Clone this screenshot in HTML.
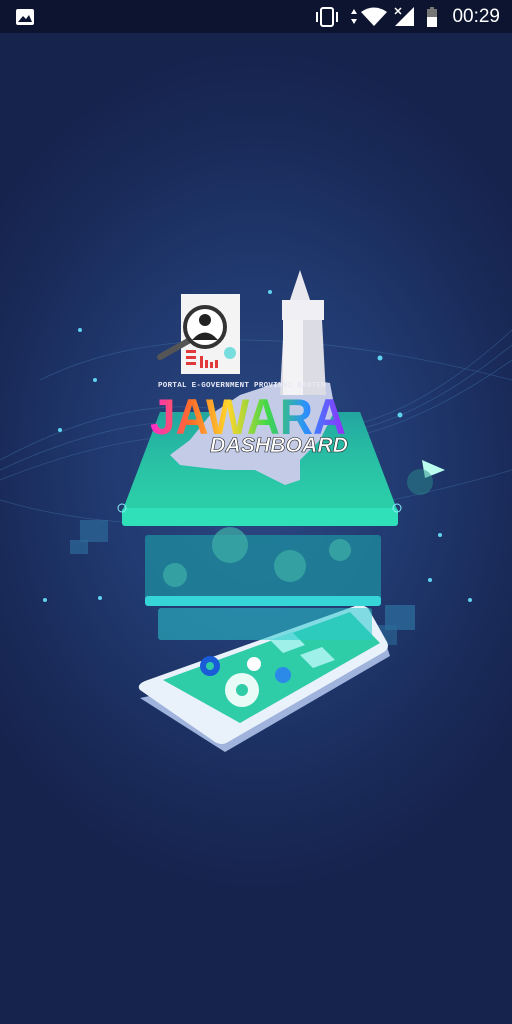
<!DOCTYPE html>
<html><head><meta charset="utf-8"><style>
html,body{margin:0;padding:0}
body{width:512px;height:1024px;overflow:hidden;position:relative;font-family:"Liberation Sans",sans-serif;
background:radial-gradient(ellipse 330px 420px at 256px 470px,#2b4884 0%,#213a70 45%,#1a2c5c 75%,#16234d 100%);}
.sb{position:absolute;left:0;top:0;width:512px;height:33px;background:#0c1430;color:#fff}
.t{position:absolute;right:12px;top:6px;font-size:19px;}
</style></head><body>
<div class="sb">
<svg width="512" height="33" style="position:absolute;left:0;top:0">
<rect x="16" y="9" width="18" height="16" rx="2" fill="#fff"/><path d="M18 22 L23 16 L26 19 L29 15 L32 22Z" fill="#0c1430"/>
<rect x="321" y="8" width="12" height="18" rx="2" fill="none" stroke="#fff" stroke-width="2"/>
<rect x="316" y="12" width="2" height="10" fill="#fff"/><rect x="336" y="12" width="2" height="10" fill="#fff"/>
<path d="M351 14 L354 9 L357 14Z M351 19 L354 24 L357 19Z" fill="#fff"/>
<path d="M361 12 Q374 3 387 12 L374 26Z" fill="#fff"/>
<path d="M395 26 L414 26 L414 7Z" fill="#fff"/><path d="M395 8 L401 14 M401 8 L395 14" stroke="#fff" stroke-width="1.5"/>
<rect x="427" y="9" width="10" height="18" fill="#777"/><rect x="427" y="17" width="10" height="10" fill="#fff"/><rect x="430" y="7" width="4" height="2" fill="#777"/>
</svg>
<div class="t">00:29</div></div>
<svg width="512" height="1024" style="position:absolute;left:0;top:0">
<defs>
<linearGradient id="g1" x1="0" y1="0" x2="0" y2="1"><stop offset="0" stop-color="#1f8f9a" stop-opacity="0.6"/><stop offset="1" stop-color="#36e0b0" stop-opacity="0.3"/></linearGradient>
<linearGradient id="rb" x1="0" y1="0" x2="1" y2="0"><stop offset="0" stop-color="#ff2bd0"/><stop offset="0.2" stop-color="#ff6a2b"/><stop offset="0.4" stop-color="#ffd52b"/><stop offset="0.6" stop-color="#3fd84a"/><stop offset="0.8" stop-color="#2b8fff"/><stop offset="1" stop-color="#9a2bff"/></linearGradient>
</defs>
<g fill="none" stroke="#3f6fa6" stroke-width="0.8" opacity="0.5">
<path d="M0 460 Q150 380 260 420 T512 330"/><path d="M0 470 Q150 400 260 430 T512 345"/>
<path d="M0 480 Q150 420 260 440 T512 360"/><path d="M40 380 Q200 300 512 380"/>
<path d="M0 500 Q200 560 512 470"/>
</g>
<g fill="#5fd3f0">
<circle cx="80" cy="330" r="2"/><circle cx="60" cy="430" r="2"/><circle cx="95" cy="380" r="2"/><circle cx="380" cy="358" r="2.5"/>
<circle cx="270" cy="292" r="2"/><circle cx="400" cy="415" r="2.5"/><circle cx="100" cy="598" r="2"/><circle cx="45" cy="600" r="2"/>
<circle cx="470" cy="600" r="2"/><circle cx="440" cy="535" r="2"/><circle cx="430" cy="580" r="2"/>
</g>
<rect x="80" y="520" width="28" height="22" fill="#2c6a9a" opacity="0.7"/><rect x="70" y="540" width="18" height="14" fill="#2c6a9a" opacity="0.7"/>
<rect x="385" y="605" width="30" height="25" fill="#2c6a9a" opacity="0.8"/><rect x="375" y="625" width="22" height="20" fill="#2c6a9a" opacity="0.6"/>
<!-- phone -->
<path d="M140 698 L225 752 L390 656 L387 647 Z" fill="#9fb3dc"/>
<path d="M140 690 Q136 685 145 681 L355 606 Q362 604 368 608 L387 642 Q390 648 384 652 L228 742 Q222 746 215 742 Z" fill="#e9f1fb"/>
<path d="M163 680 L350 612 L380 643 L240 723 Z" fill="#2fcca8"/>
<g fill="#9ef0e8"><path d="M270 640 L292 632 L305 645 L283 653Z"/><path d="M300 655 L322 647 L335 660 L313 668Z"/></g>
<circle cx="242" cy="690" r="17" fill="#e8fbf6"/><circle cx="242" cy="690" r="6" fill="#2fcca8"/>
<circle cx="210" cy="666" r="10" fill="#1a5bd8"/><circle cx="210" cy="666" r="4" fill="#2fcca8"/>
<circle cx="254" cy="664" r="7" fill="#fff"/><circle cx="283" cy="675" r="8" fill="#2b8ae8"/>
<!-- panels -->
<rect x="158" y="608" width="214" height="32" rx="3" fill="#2bc9d0" opacity="0.55"/>
<rect x="145" y="535" width="236" height="70" rx="3" fill="#1e8fa0" opacity="0.75"/>
<rect x="145" y="596" width="236" height="10" rx="3" fill="#35d5d8"/>
<g fill="#3fb1a8" opacity="0.7"><circle cx="230" cy="545" r="18"/><circle cx="290" cy="566" r="16"/><circle cx="175" cy="575" r="12"/><circle cx="340" cy="550" r="11"/></g>
<!-- trapezoid -->
<path d="M160 412 L360 412 L398 512 L122 512Z" fill="#27c7a5"/>
<path d="M160 412 L360 412 L398 512 L122 512Z" fill="url(#g1)"/>
<rect x="122" y="508" width="276" height="18" rx="3" fill="#2fe0b8"/>
<circle cx="122" cy="508" r="4" fill="none" stroke="#8ef"/><circle cx="397" cy="508" r="4" fill="none" stroke="#8ef"/>
<!-- map -->
<path d="M170 455 L190 440 L210 415 L240 395 L270 385 L300 378 L330 383 L335 410 L320 440 L300 460 L300 480 L285 485 L255 470 L225 470 L205 468 L180 465Z" fill="#c3cbe7"/>
<!-- tower -->
<path d="M290 300 L300 270 L310 300Z" fill="#e8e8ee"/>
<rect x="282" y="300" width="42" height="20" fill="#f0f0f4"/>
<path d="M284 320 L322 320 L326 395 L280 395Z" fill="#dcdce4"/>
<rect x="283" y="320" width="20" height="75" fill="#f3f3f6"/>
<!-- document -->
<rect x="181" y="294" width="59" height="80" fill="#f4f4f4"/>
<line x1="160" y1="357" x2="190" y2="340" stroke="#555" stroke-width="6" stroke-linecap="round"/>
<circle cx="205" cy="327" r="20" fill="#fff" stroke="#333" stroke-width="4"/>
<circle cx="205" cy="320" r="6" fill="#222"/><path d="M192 340 Q205 325 218 340Z" fill="#222"/>
<g fill="#e23a3a"><rect x="186" y="350" width="10" height="3"/><rect x="186" y="356" width="10" height="3"/><rect x="186" y="362" width="10" height="3"/><rect x="200" y="356" width="3" height="12"/><rect x="205" y="360" width="3" height="8"/><rect x="210" y="362" width="3" height="6"/><rect x="215" y="360" width="3" height="8"/></g>
<circle cx="230" cy="353" r="6" fill="#7dd"/>
<text x="158" y="387" font-size="7.5" font-family="Liberation Mono" font-weight="bold" fill="#e8e8f4" letter-spacing="0.3">PORTAL E-GOVERNMENT PROVINSI BANTEN</text>
<text x="150" y="434" font-size="50" font-weight="bold" fill="url(#rb)" textLength="196" lengthAdjust="spacingAndGlyphs">JAWARA</text>
<text x="210" y="452" font-size="21" font-style="italic" font-weight="bold" fill="#fff" stroke="#222" stroke-width="0.6" textLength="138" lengthAdjust="spacingAndGlyphs">DASHBOARD</text>
<path d="M422 460 L445 470 L425 478Z" fill="#bfe"/>
<circle cx="420" cy="482" r="13" fill="#2a8a8a" opacity="0.5"/>
</svg>
</body></html>
